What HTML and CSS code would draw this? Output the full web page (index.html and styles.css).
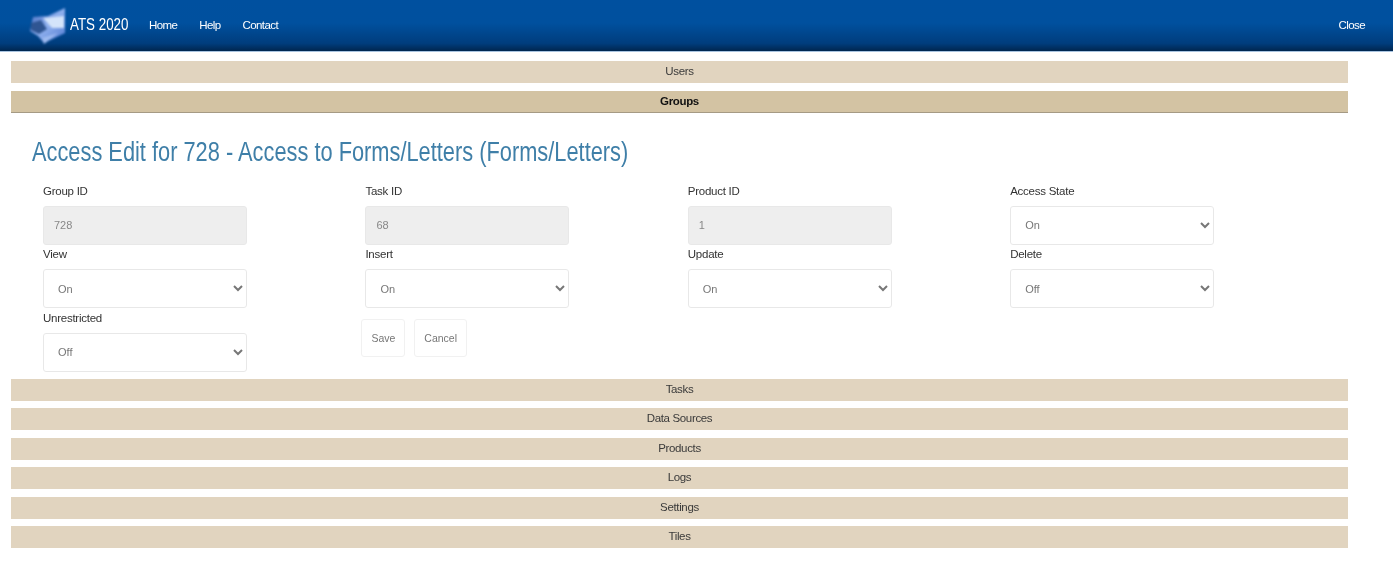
FILE: index.html
```html
<!DOCTYPE html>
<html lang="en">
<head>
<meta charset="utf-8">
<title>ATS 2020</title>
<link rel="stylesheet" href="styles.css">
</head>
<body>
<div class="page">
<header class="topbar">
  <a class="brand" href="#">
    <svg class="logo" width="40" height="44" viewBox="0 0 40 44" aria-hidden="true">
      <defs>
        <linearGradient id="lg" x1="0" y1="0" x2="1" y2="1">
          <stop offset="0" stop-color="#3f66bc"/>
          <stop offset=".5" stop-color="#8fb0ee"/>
          <stop offset="1" stop-color="#4f78d0"/>
        </linearGradient>
      </defs>
      <polygon points="5,14 20,13 37,5 37,30 16,40 10,33 2,28" fill="url(#lg)"/>
      <polygon points="3,20 13,17 19,26 11,31 3,27" fill="#2f5592"/>
      <polygon points="15,15 36,13 36,25 24,25" fill="#d4e4fa"/>
      <polygon points="14,35 30,30 16,41" fill="#9dbaf0"/>
    </svg>
    <span class="brand-name">ATS 2020</span>
  </a>
  <nav class="nav">
    <a href="#">Home</a>
    <a href="#">Help</a>
    <a href="#">Contact</a>
  </nav>
  <a class="close" href="#">Close</a>
</header>

<main class="accordion">
  <div class="bar">Users</div>
  <div class="bar active">Groups</div>
  <section class="panel">
    <h1>Access Edit for 728 - Access to Forms/Letters (Forms/Letters)</h1>
    <form class="grid">
      <div class="field"><label>Group ID</label><input class="control" value="728" disabled></div>
      <div class="field"><label>Task ID</label><input class="control" value="68" disabled></div>
      <div class="field"><label>Product ID</label><input class="control" value="1" disabled></div>
      <div class="field"><label>Access State</label><select class="control"><option>On</option></select></div>
      <div class="field"><label>View</label><select class="control"><option>On</option></select></div>
      <div class="field"><label>Insert</label><select class="control"><option>On</option></select></div>
      <div class="field"><label>Update</label><select class="control"><option>On</option></select></div>
      <div class="field"><label>Delete</label><select class="control"><option>Off</option></select></div>
      <div class="field"><label>Unrestricted</label><select class="control"><option>Off</option></select></div>
      <div class="actions"><button type="button">Save</button><button type="button">Cancel</button></div>
    </form>
  </section>
  <div class="bar">Tasks</div>
  <div class="bar">Data Sources</div>
  <div class="bar">Products</div>
  <div class="bar">Logs</div>
  <div class="bar">Settings</div>
  <div class="bar">Tiles</div>
</main>
</div>
</body>
</html>
```

FILE: styles.css
```css
* { box-sizing: border-box; }
html, body { margin: 0; padding: 0; background: #fff; }
body {
  font-family: "Liberation Sans", Arial, sans-serif;
  color: #333;
  height: 574px;
  overflow: hidden;
}
.page { filter: blur(0.7px); height: 574px; }
.topbar {
  height: 52px;
  display: flex;
  align-items: center;
  padding: 0 28px 2px 28px;
  background: linear-gradient(#00509f 0%, #00509e 45%, #003d7d 85%, #00264f 100%);
  border-bottom: 1px solid #a9c4e0;
}
.topbar a { color: #fff; text-decoration: none; }
.brand { display: flex; align-items: center; font-size: 16.5px; margin-right: 21px; }
.logo { margin-right: 2px; filter: blur(1px); }
.brand-name { display: inline-block; width: 58px; white-space: nowrap; transform: scaleX(0.81); transform-origin: left center; }
.nav { display: flex; gap: 22px; font-size: 11.5px; letter-spacing: -0.6px; }
.close { margin-left: auto; font-size: 11.5px; letter-spacing: -0.6px; }
.accordion { padding: 9px 45px 0 11px; display: flex; flex-direction: column; }
.bar {
  height: 22px;
  margin-bottom: 7.5px;
  background: #e1d4bf;
  text-align: center;
  font-size: 11.5px;
  line-height: 21.6px;
  letter-spacing: -0.35px;
  color: #3a3a3a;
}
.bar.active { background: #d3c3a3; font-weight: bold; color: #111; border-bottom: 1px solid #a59a84; line-height: 20px; }
.panel { padding: 15px 0 0 21px; height: 266px; margin-top: -7.5px; }
h1 {
  display: inline-block;
  margin: 7px 0 0;
  font-size: 27.5px;
  font-weight: normal;
  line-height: 34px;
  color: #3f7fa8;
  white-space: nowrap;
  transform: scaleX(0.793);
  transform-origin: left center;
}
.grid {
  display: grid;
  grid-template-columns: repeat(4, 322.4px);
  grid-auto-rows: 63.5px;
  padding: 13px 0 0 11px;
}
.field { display: flex; flex-direction: column; align-items: flex-start; }
.field label { font-size: 11.5px; line-height: 14px; height: 24px; padding-top: 2px; letter-spacing: -0.25px; color: #333; }
.control {
  width: 204px;
  height: 39px;
  border: 1px solid #e8e8e8;
  border-radius: 3px;
  padding: 0 10px;
  font: 11px "Liberation Sans", Arial, sans-serif;
  color: #777;
  background-color: #fff;
}
input.control { background: #eee; color: #888; }
.actions { display: flex; gap: 9px; align-items: flex-start; padding-top: 10px; margin-left: -4px; }
.actions button {
  height: 38px;
  padding: 0 9px;
  border: 1px solid #f1f1f1;
  border-radius: 3px;
  background: #fff;
  color: #777;
  font: 10.5px "Liberation Sans", Arial, sans-serif;
}
```
